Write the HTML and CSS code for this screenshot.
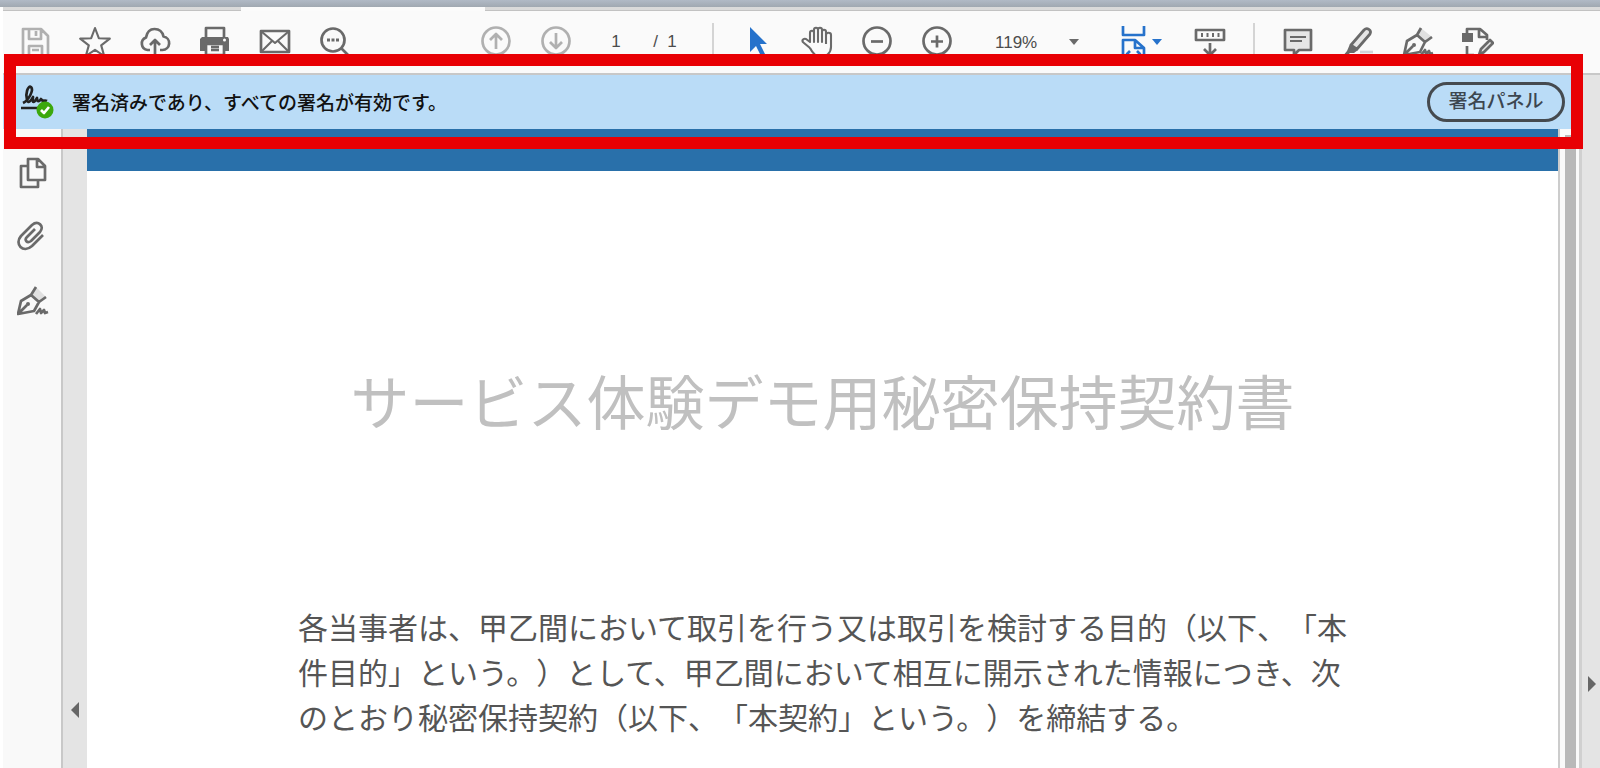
FILE: index.html
```html
<!DOCTYPE html>
<html lang="ja">
<head>
<meta charset="utf-8">
<title>署名パネル</title>
<link rel="stylesheet" href="styles.css">
</head>
<body>
<div class="titlebar"></div>
<div class="tabs"><span class="tab tab-first"></span><span class="tab tab-active"></span><span class="tab tab-rest"></span></div>
<header class="toolbar">
  <div class="group">
    <button class="tool faded" aria-label="保存"><svg viewBox="0 0 32 32"><path d="M4 3h18l7 7v21H4zM10 3v10h12V3M17 5v5M10 31V20h13v11M13 24h7"/></svg></button>
    <button class="tool" aria-label="スター"><svg viewBox="0 0 32 32"><path class="thin" d="M16 2l3.800 10.200 11 .4-8.600 6.800 3 10.600-9.200-6.200L6.800 30l3-10.600L1.200 12.600l11-.4z"/></svg></button>
    <button class="tool" aria-label="アップロード"><svg viewBox="0 0 32 32"><path d="M11 24H8.500A6.500 6.500 0 0 1 7 11.500C8 6 11 3 15.500 3c5 0 8 3 9 7.500a6.800 6.800 0 0 1-1 13.500H21M16 30V14M11 19l5-5 5 5"/></svg></button>
    <button class="tool" aria-label="印刷"><svg viewBox="0 0 32 32"><path d="M7 12V2h18v10"/><path class="solid" d="M3 11h26l1 2v12h-5v-6H7v6H1V13z"/><path d="M7 18v11h18V18zM12 21h8M12 24h8"/><circle class="light" cx="25.500" cy="14" r="1.500"/></svg></button>
    <button class="tool" aria-label="メール"><svg viewBox="0 0 32 32"><path d="M2 5h28v21H2z"/><path class="thin" d="M3 6l13 11L29 6M3 25l10-10M29 25L19 15"/></svg></button>
    <button class="tool" aria-label="検索"><svg viewBox="0 0 32 32"><circle cx="14" cy="14" r="11.500"/><path d="M22 22l8 8"/><path class="solid" d="M8 12.500h3v3H8zM12.500 12.500h3v3h-3zM17 12.500h3v3h-3z"/></svg></button>
  </div>
  <div class="group nav">
    <button class="tool faded" aria-label="前のページ"><svg viewBox="0 0 32 32"><circle cx="16" cy="15" r="13.500"/><path d="M16 23V9M10 14l6-6 6 6"/></svg></button>
    <button class="tool faded" aria-label="次のページ"><svg viewBox="0 0 32 32"><circle cx="16" cy="15" r="13.500"/><path d="M16 7v14M10 16l6 6 6-6"/></svg></button>
    <input class="page-number" aria-label="ページ番号" value="1">
    <span class="page-total">/&nbsp; 1</span>
  </div>
  <span class="separator"></span>
  <div class="group">
    <button class="tool blue" aria-label="選択"><svg viewBox="0 0 32 32"><path class="solid" d="M9 1l17 17h-7l5 10-4 2-5-10-6 6z"/></svg></button>
    <button class="tool" aria-label="手のひら"><svg viewBox="0 0 32 32"><path class="thin" d="M9 22L3 17c-3-2-1-5 2-4l4 3V7c0-3 4-3 4 0v9V4c0-3 4-3 4 0v12V4c0-3 4-3 4 0v12V6c0-3 4-3 4 0v12M25 9c0-3 5-3 5 0v12c0 6-5 10-10 10-5 0-8-3-11-9"/></svg></button>
    <button class="tool" aria-label="縮小"><svg viewBox="0 0 32 32"><circle cx="16" cy="15" r="13.500"/><path d="M10 15.500h12"/></svg></button>
    <button class="tool" aria-label="拡大"><svg viewBox="0 0 32 32"><circle cx="16" cy="15" r="13.500"/><path d="M10 15.500h12M16 9.500v12"/></svg></button>
  </div>
  <div class="zoom">
    <select aria-label="倍率"><option>119%</option></select>
    <svg class="caret" viewBox="0 0 10 6"><path class="solid" d="M0 0h10L5 6z"/></svg>
  </div>
  <button class="tool fit blue" aria-label="幅に合わせる"><svg viewBox="0 0 32 32"><path d="M6 0v9h21V0M6 30V14h12l9 8v8M18 14v8h9M13 25l-3 3 3 3M20 25l3 3-3 3"/></svg><svg class="caret" viewBox="0 0 10 6"><path class="solid" d="M0 0h10L5 6z"/></svg></button>
  <button class="tool" aria-label="スクロール"><svg viewBox="0 0 32 32"><path d="M2 4h28v10H2zM16 17v12M10 23l6 6 6-6"/><path class="solid" d="M7 7h2v4H7zM12.500 7h2v4h-2zM18 7h2v4h-2zM23.500 7h2v4h-2z"/></svg></button>
  <span class="separator"></span>
  <div class="group">
    <button class="tool" aria-label="コメント"><svg viewBox="0 0 32 32"><path class="tint" d="M3 4h26v20H17l-5 5v-5H3z"/><path class="thin" d="M8 11h16M8 15h12"/></svg></button>
    <button class="tool" aria-label="ハイライト"><svg viewBox="0 0 32 32"><path class="tint" d="M9 19L22 4c3-3 8 0 6 4L15 23z"/><path class="solid" d="M8 18l8 6-4 3H8l-5 4H0l5-6z"/><path class="pale" d="M18 26h13"/></svg></button>
    <button class="tool" aria-label="署名"><svg viewBox="0 0 32 32"><path class="tint-only" d="M19 2l-4 7 8 7 7-5z"/><path d="M2 29L5 15l10-6 8 7-5 10zM2 29l9-9M19 2l-4 7 8 7 7-5M19 29l4-5 1 4 3-3 1 3 3-1"/><circle class="solid" cx="12" cy="19" r="2"/></svg></button>
    <button class="tool" aria-label="編集"><svg viewBox="0 0 32 32"><path class="solid" d="M0 7h11v9H0z"/><path d="M5 7V3h13l7 6v5M17 3v8h8M5 20v9h7"/><path class="tint" d="M17 29l2-6 9-9 3 3-9 9z"/></svg></button>
  </div>
</header>
<div class="workspace">
  <div class="viewer">
    <div class="notice">
      <svg class="signed" viewBox="0 0 34 36"><path class="ink" d="M3 19C9 16 14 6 11 3 8 1 5 10 7 16c1 4 4 1 6-3-1 7 1 6 4 1 0 4 2 4 4 1 1 3 4 1 6 2M1 24h20"/><circle class="ok" cx="25" cy="26" r="8.500"/><path class="tick" d="M21 26l3 3 5-6"/></svg>
      <p>署名済みであり、すべての署名が有効です。</p>
      <button class="panel-button">署名パネル</button>
      <div class="highlight"></div>
    </div>
    <div class="content">
      <nav class="sidebar">
        <button class="side" aria-label="ページサムネール"><svg viewBox="0 0 32 32"><path d="M11 2h10l7 7v14H11zM20 2v8h8M10 9H4v21h17v-6"/></svg></button>
        <button class="side" aria-label="添付ファイル"><svg viewBox="0 0 32 32"><path d="M26 14L15 25C6 33-3 23 4 15L15 4c6-5 13 1 8 7L14 20c-4 3-7-1-4-4l8-8"/></svg></button>
        <button class="side" aria-label="署名"><svg viewBox="0 0 32 32"><path class="tint-only" d="M19 2l-5 8 8 7 7-5z"/><path d="M1 29L4 16l10-6 8 7-5 9zM1 29l9-9M19 2l-5 8 8 7 7-5M19 29l4-5 1 4 3-3 1 3 3-1"/><circle class="solid" cx="11" cy="19" r="2"/></svg></button>
      </nav>
      <button class="gutter" aria-label="閉じる"><svg viewBox="0 0 8 16"><path class="solid" d="M8 0v16L0 8z"/></svg></button>
      <main class="page">
        <div class="band"></div>
        <h1>サービス体験デモ用秘密保持契約書</h1>
        <p class="clause">各当事者は、甲乙間において取引を行う又は取引を検討する目的（以下、「本<br>件目的」という。）として、甲乙間において相互に開示された情報につき、次<br>のとおり秘密保持契約（以下、「本契約」という。）を締結する。</p>
      </main>
      <div class="track"><div class="thumb"></div></div>
    </div>
  </div>
  <button class="right-panel" aria-label="開く"><svg viewBox="0 0 8 16"><path class="solid" d="M0 0v16l8-8z"/></svg></button>
</div>
</body>
</html>
```
FILE: styles.css
```css
* { box-sizing: border-box; }
body {
  margin: 0;
  min-height: 100vh;
  display: flex;
  flex-direction: column;
  overflow: hidden;
  background: #fff;
  font-family: "Liberation Sans", "Noto Sans CJK JP", sans-serif;
  text-spacing-trim: space-all;
}
button, input, select {
  appearance: none;
  border: 0;
  padding: 0;
  background: none;
  color: inherit;
  font: inherit;
}
h1, p { margin: 0; font-family: "Noto Sans CJK JP", sans-serif; }
svg {
  display: block;
  fill: none;
  stroke: currentColor;
  stroke-width: 2.7;
  stroke-linejoin: round;
}
.thin { stroke-width: 2.1; }
.solid { fill: currentColor; stroke: none; }
.light { fill: #fff; stroke: none; }
.tint { fill: #e6e6e6; }
.tint-only { fill: #e0e0e0; stroke: none; }
.pale { stroke: #d0d3d8; }

.titlebar { height: 7px; background: linear-gradient(#b1bac6, #a0a8b1); }
.tabs { display: flex; height: 4px; margin-left: 3px; }
.tab { border-bottom: 1px solid #c2c2c2; background: #dadada; }
.tab-first { width: 238px; }
.tab-active { width: 244px; background: #fbfbfb; border-color: #fbfbfb; }
.tab-rest { flex: 1; }

.toolbar {
  display: flex;
  align-items: center;
  height: 62px;
  margin-left: 3px;
  padding-left: 2px;
  background: #fafafa;
  color: #6a6a6a;
  font-size: 17px;
}
.group { display: flex; align-items: center; }
.nav { margin-left: 101px; }
.tool {
  width: 60px;
  height: 32px;
  display: flex;
  align-items: center;
  justify-content: center;
}
.tool svg { width: 32px; height: 32px; }
.faded { color: #b0b0b0; }
.blue { color: #2672cb; }
.page-number, .page-total, .zoom select { color: #4c4c4c; }
.page-number { width: 60px; text-align: center; }
.page-total { width: 38px; text-align: center; }
.separator {
  width: 2px;
  height: 38px;
  margin: 0 13px;
  background: #d4d4d4;
}
.nav + .separator { margin-left: 28px; }
.zoom { display: flex; align-items: center; width: 136px; padding-left: 28px; }
.zoom select { width: 74px; }
.caret, .tool .caret { width: 10px; height: 6px; }
.fit { width: 77px; padding-left: 14px; justify-content: flex-start; }
.fit .caret { margin-left: 3px; }

.workspace { flex: 1; display: flex; margin-left: 3px; border-top: 2px solid #c8c8c8; }
.viewer { flex: 1; display: flex; flex-direction: column; }
.notice {
  position: relative;
  display: flex;
  align-items: center;
  height: 54px;
  padding: 0 14px 0 17px;
  background: #badcf7;
  color: #111;
}
.signed { width: 34px; height: 36px; }
.ink { stroke: #222; }
.ok { fill: #3ca80c; stroke: none; }
.tick { stroke: #fff; }
.notice p { flex: 1; padding-left: 18px; font-size: 19px; font-weight: 500; line-height: 28px; }
.panel-button {
  width: 138px;
  height: 40px;
  padding-bottom: 4px;
  border: 3px solid #454a4f;
  border-radius: 20px;
  color: #3c4650;
  font: 500 19px/30px "Noto Sans CJK JP", sans-serif;
}
.highlight {
  position: absolute;
  inset: -21px -4px -20px 1px;
  border: 12px solid #e80004;
  pointer-events: none;
}

.content { flex: 1; display: flex; }
.sidebar {
  width: 60px;
  padding: 28px 0 0 14px;
  display: flex;
  flex-direction: column;
  gap: 32px;
  border-right: 2px solid #c8c8c8;
  background: #f9f9f9;
  color: #6a6a6a;
}
.side { width: 32px; height: 32px; }
.side svg { width: 32px; height: 32px; }
.gutter, .right-panel { display: flex; background: #e4e4e4; color: #666; }
.gutter { width: 24px; align-items: flex-end; padding: 0 0 50px 8px; }
.gutter svg, .right-panel svg { width: 8px; height: 16px; }
.right-panel {
  width: 21px;
  align-items: flex-end;
  padding: 0 0 76px 6px;
  border-left: 3px solid #d0d0d0;
}
.page { flex: 1; background: #fff; }
.band { height: 42px; background: #2970aa; }
.page h1 {
  padding-top: 186px;
  text-align: center;
  color: #c0c0c0;
  font-size: 59px;
  line-height: 86px;
  font-weight: 400;
}
.clause {
  width: max-content;
  margin: 161px auto 0;
  color: #555;
  font-size: 30px;
  line-height: 45px;
}
.track { width: 21px; padding: 0 3px 0 5px; border-left: 2px solid #ccc; background: #fafafa; }
.thumb { height: 100%; margin-top: 6px; background: #b9b9b9; }
```
